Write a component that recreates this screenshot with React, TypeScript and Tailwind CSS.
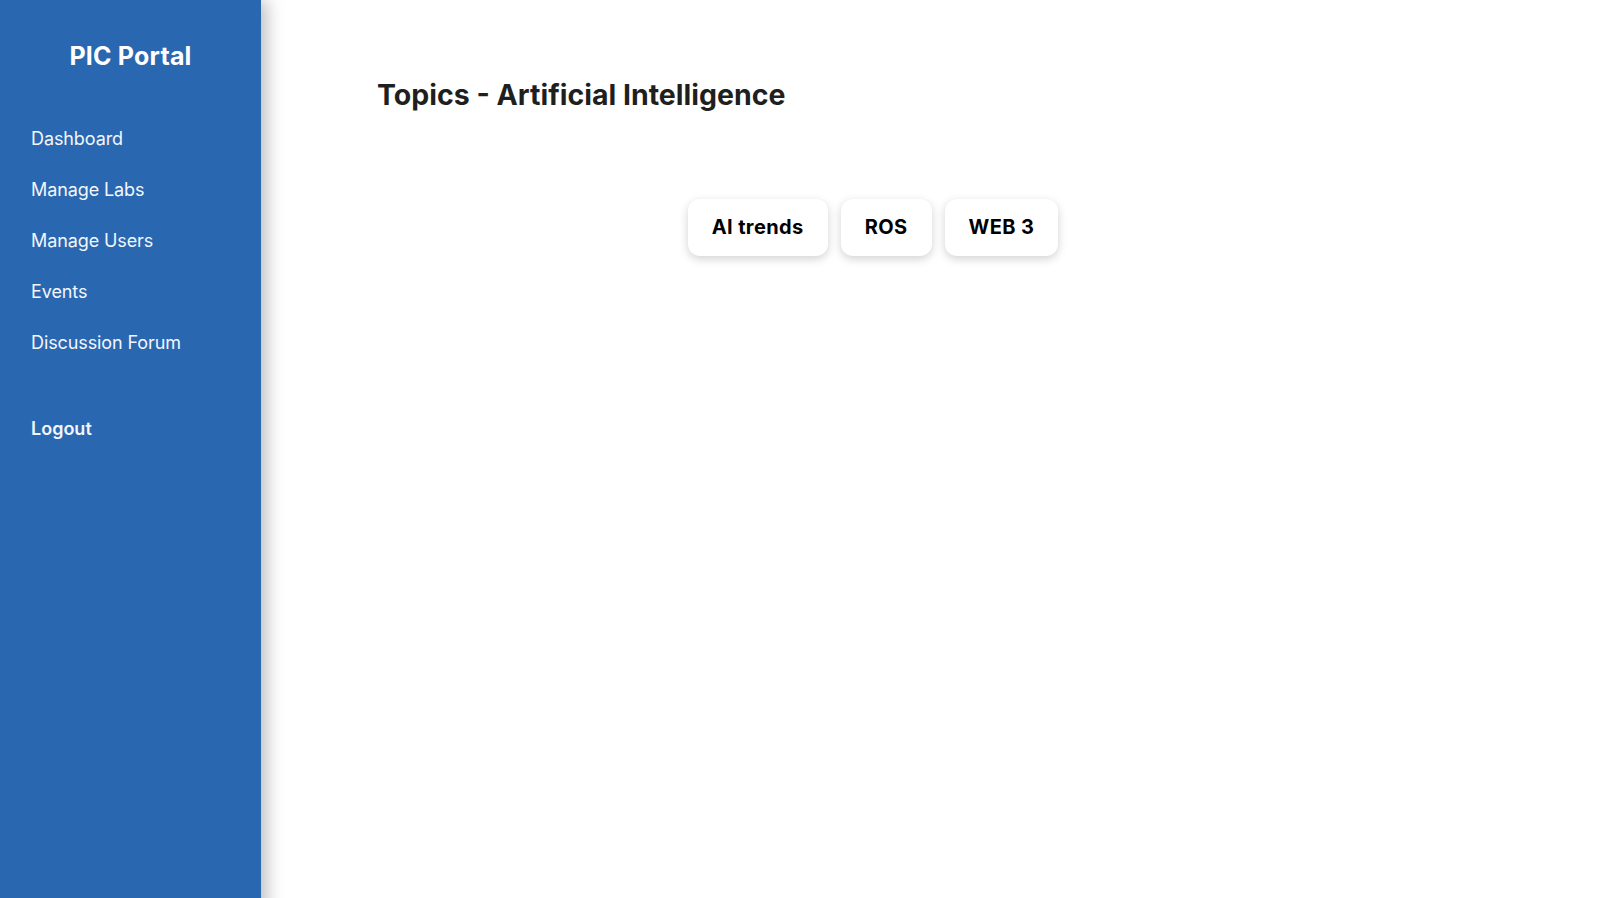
const navItems = ['Dashboard', 'Manage Labs', 'Manage Users', 'Events', 'Discussion Forum'];
const topics = ['AI trends', 'ROS', 'WEB 3'];

export default function App() {
  return (
    <div className="flex min-h-[930px] bg-white" style={{ fontFamily: 'Inter, "Open Sans", sans-serif' }}>
      <aside className="w-[261px] shrink-0 bg-[#2967b1] text-white shadow-[6px_0_16px_rgba(0,0,0,0.25)] z-10">
        <h1 className="pt-[38px] text-center text-[25px] font-bold tracking-[0.2px]">PIC Portal</h1>
        <nav className="mt-[52px] flex flex-col gap-[29px] pl-[31px] text-[18px] text-[#f3f6fb]">
          {navItems.map((item) => (
            <a key={item} href="#" className="leading-[22px] tracking-[-0.1px]">
              {item}
            </a>
          ))}
          <a href="#" className="mt-[35px] leading-[22px] font-semibold">
            Logout
          </a>
        </nav>
      </aside>
      <main className="flex-1 pl-[116px] pt-[74px]">
        <h2 className="text-[28.5px] font-bold text-[#1f1f1f] tracking-[0px]">Topics - Artificial Intelligence</h2>
        <div className="mt-[82px] flex w-[992px] justify-center gap-[13px]">
          {topics.map((t) => (
            <button
              key={t}
              className="h-[57px] rounded-[12px] bg-white px-[24px] text-[20px] font-bold text-black tracking-[0.4px] shadow-[0_3px_10px_rgba(0,0,0,0.18)]"
            >
              {t}
            </button>
          ))}
        </div>
      </main>
    </div>
  );
}
